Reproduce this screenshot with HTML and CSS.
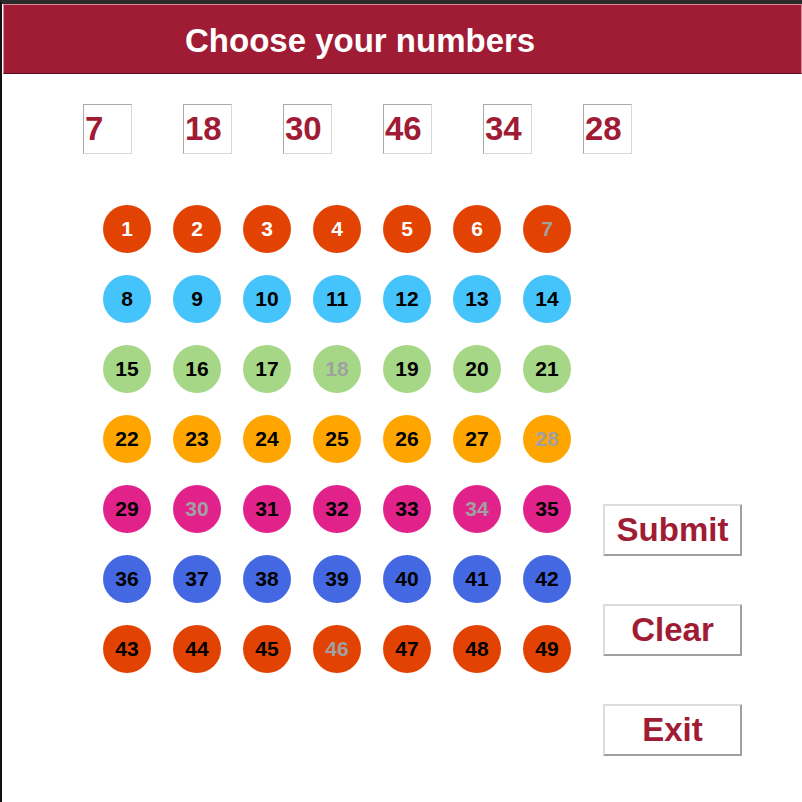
FILE: index.html
```html
<!DOCTYPE html>
<html>
<head>
<meta charset="utf-8">
<link rel="stylesheet" href="styles.css">
</head>
<body>
<div class="window">
  <header class="header"><h1 class="title">Choose your numbers</h1></header>
  <div class="picks">
    <div class="pick">7</div>
    <div class="pick">18</div>
    <div class="pick">30</div>
    <div class="pick">46</div>
    <div class="pick">34</div>
    <div class="pick">28</div>
  </div>
  <div class="main">
    <div class="grid">
      <div class="ball r1">1</div><div class="ball r1">2</div><div class="ball r1">3</div><div class="ball r1">4</div><div class="ball r1">5</div><div class="ball r1">6</div><div class="ball r1 sel">7</div>
      <div class="ball r2">8</div><div class="ball r2">9</div><div class="ball r2">10</div><div class="ball r2">11</div><div class="ball r2">12</div><div class="ball r2">13</div><div class="ball r2">14</div>
      <div class="ball r3">15</div><div class="ball r3">16</div><div class="ball r3">17</div><div class="ball r3 sel">18</div><div class="ball r3">19</div><div class="ball r3">20</div><div class="ball r3">21</div>
      <div class="ball r4">22</div><div class="ball r4">23</div><div class="ball r4">24</div><div class="ball r4">25</div><div class="ball r4">26</div><div class="ball r4">27</div><div class="ball r4 sel">28</div>
      <div class="ball r5">29</div><div class="ball r5 sel">30</div><div class="ball r5">31</div><div class="ball r5">32</div><div class="ball r5">33</div><div class="ball r5 sel">34</div><div class="ball r5">35</div>
      <div class="ball r6">36</div><div class="ball r6">37</div><div class="ball r6">38</div><div class="ball r6">39</div><div class="ball r6">40</div><div class="ball r6">41</div><div class="ball r6">42</div>
      <div class="ball r7">43</div><div class="ball r7">44</div><div class="ball r7">45</div><div class="ball r7 sel">46</div><div class="ball r7">47</div><div class="ball r7">48</div><div class="ball r7">49</div>
    </div>
    <div class="buttons">
      <button class="btn">Submit</button>
      <button class="btn">Clear</button>
      <button class="btn">Exit</button>
    </div>
  </div>
</div>
</body>
</html>
```

FILE: styles.css
```css
html, body {
  margin: 0;
  padding: 0;
  background: #1a1a1a;
}
body {
  width: 802px;
  height: 802px;
  overflow: hidden;
}
.window {
  box-sizing: border-box;
  width: 802px;
  height: 802px;
  border-top: 4px solid #2b2b2b;
  border-left: 2px solid #111;
  background: #fff;
  font-family: "Liberation Sans", Arial, sans-serif;
}
.header {
  box-sizing: border-box;
  height: 70px;
  margin-left: 1px;
  background: #a01c34;
  border: 1px solid #d8899a;
  border-bottom-color: #5a0f1c;
  padding-left: 181px;
}
.title {
  margin: 0;
  color: #fff;
  font-size: 33px;
  font-weight: bold;
  line-height: 71px;
}
.picks {
  display: flex;
  gap: 51px;
  padding-left: 81px;
  padding-top: 30px;
}
.pick {
  box-sizing: border-box;
  width: 49px;
  height: 50px;
  border: 1px solid #d8d8d8;
  border-top-color: #a9a9a9;
  border-left-color: #a9a9a9;
  color: #a01c34;
  font-size: 33px;
  font-weight: bold;
  line-height: 48px;
  padding-left: 1px;
}
.main {
  display: flex;
  align-items: flex-start;
  padding-left: 101px;
  padding-top: 51px;
  gap: 32px;
}
.grid {
  display: grid;
  grid-template-columns: repeat(7, 48px);
  grid-auto-rows: 48px;
  gap: 22px;
}
.ball {
  border-radius: 50%;
  display: flex;
  align-items: center;
  justify-content: center;
  font-size: 21px;
  font-weight: bold;
  color: #000;
}
.r1, .r7 { background: #e24303; }
.r1 { color: #fff; }
.r2 { background: #45c3fb; }
.r3 { background: #a6d786; }
.r4 { background: #ffa500; }
.r5 { background: #e2228b; }
.r6 { background: #4468e2; }
.ball.sel { color: #a0a0a0; }
.buttons {
  display: flex;
  flex-direction: column;
  gap: 48px;
  padding-top: 299px;
}
.btn {
  box-sizing: border-box;
  width: 139px;
  height: 52px;
  margin: 0;
  padding: 0;
  background: #fff;
  border: 2px solid #dcdcdc;
  border-right-color: #a0a0a0;
  border-bottom-color: #a0a0a0;
  color: #a01c34;
  font-family: "Liberation Sans", Arial, sans-serif;
  font-size: 33px;
  font-weight: bold;
}
```
